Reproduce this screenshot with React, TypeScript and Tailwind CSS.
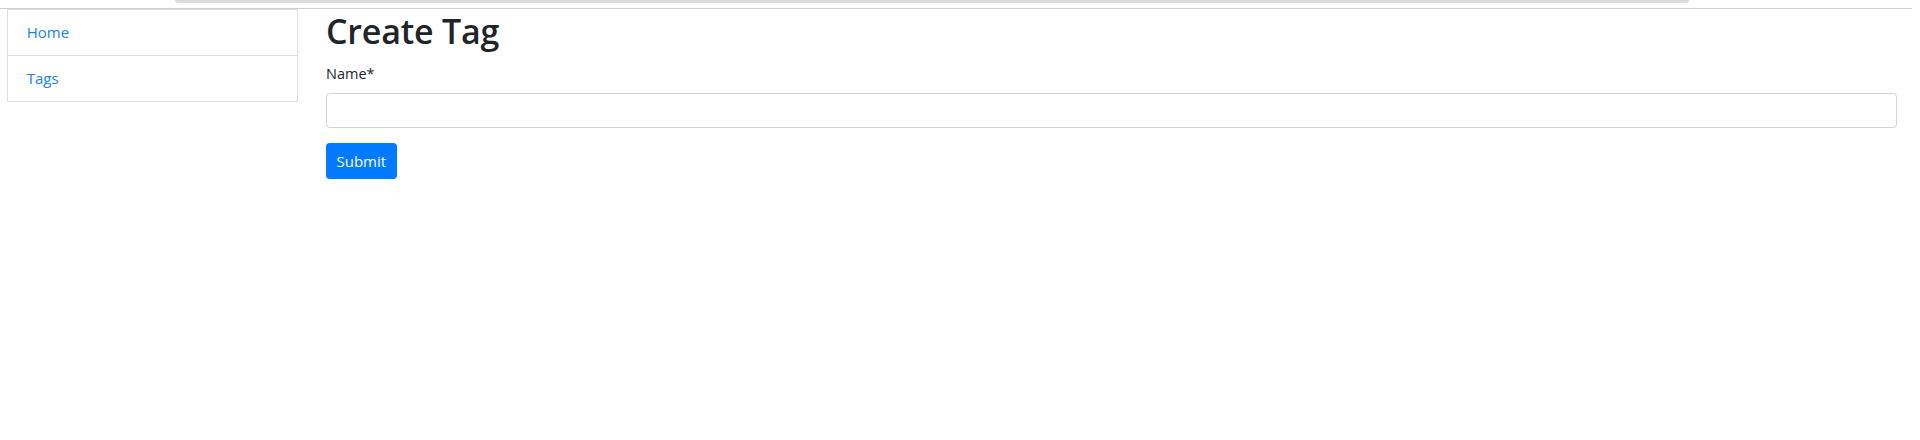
import React from "react";

export default function App() {
  return (
    <div className="relative min-h-[440px] w-full bg-white text-[#212529] font-['Open_Sans','Noto_Sans',sans-serif]">
      <div className="absolute left-[175px] top-0 h-[3px] w-[1514px] rounded-b-[6px] bg-[#dcdcdc]" />
      <div className="h-[8px]" />
      <div className="h-px w-[1912px] bg-[#cfcfcf]" />
      <div className="flex items-start">
        <ul className="ml-[7px] w-[291px] border border-[#dfdfdf] text-[15px] leading-[22.5px]">
          <li className="px-[18.75px] py-[11.25px] border-b border-[#dfdfdf]">
            <a className="text-[#1a7ff0]" href="#">Home</a>
          </li>
          <li className="px-[18.75px] py-[11.25px]">
            <a className="text-[#1a7ff0]" href="#">Tags</a>
          </li>
        </ul>
        <div className="ml-[28px] mr-[23px] flex-1">
          <h1 className="mb-[8.5px] text-[34px] leading-[45px] font-semibold tracking-[-0.2px]">Create Tag</h1>
          <div className="mb-[15px]">
            <label className="mb-[7.5px] block text-[14.5px] leading-[22.5px]">Name*</label>
            <input className="block h-[35.5px] w-full rounded-[3.75px] border border-[#ced4da] px-[11px] text-[15px] outline-none" />
          </div>
          <button className="h-[35.5px] rounded-[3.75px] bg-[#007bff] px-[10.5px] text-[15px] leading-[22.5px] text-white">Submit</button>
        </div>
      </div>
    </div>
  );
}
